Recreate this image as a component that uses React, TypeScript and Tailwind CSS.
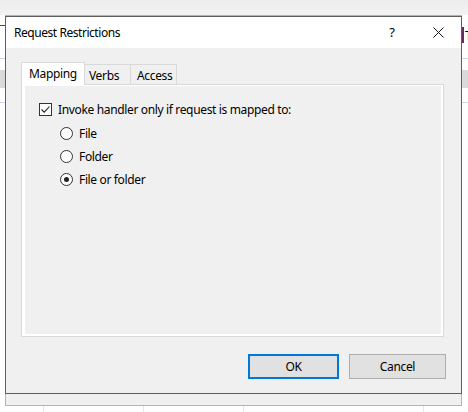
import React from "react";

const font = { fontFamily: '"Segoe UI", "Noto Sans", "Open Sans", sans-serif' };

function Radio({ checked, label }: { checked?: boolean; label: string }) {
  return (
    <div className="flex items-center h-[23px]">
      <div className="w-[13px] h-[13px] rounded-full border border-[#333333] bg-white flex items-center justify-center">
        {checked && <div className="w-[5px] h-[5px] rounded-full bg-[#222222]" />}
      </div>
      <span className="ml-[6px] text-[12px] leading-[16px] tracking-[-0.35px] text-black">{label}</span>
    </div>
  );
}

export default function App() {
  return (
    <div className="w-[468px] h-[412px] bg-white overflow-hidden flex flex-col" style={font}>
      {/* top background strip */}
      <div className="h-[15px] bg-gradient-to-b from-[#ececec] to-[#f3f3f3]" />
      <div className="flex h-[391px]">
        {/* left background strip */}
        <div className="w-[5px] flex flex-col bg-white">
          <div className="h-[10px]" />
          <div className="h-[1px] bg-[#4b4068]" />
          <div className="h-[32px]" />
          <div className="h-[1px] bg-[#c9d6e8]" />
          <div className="h-[11px]" />
          <div className="h-[18px] bg-[#dadada]" />
          <div className="h-[14px]" />
          <div className="h-[1px] bg-[#c9d6e8]" />
        </div>
        {/* main window column */}
        <div className="w-[457px] flex flex-col">
          <div className="h-[1px] bg-[#b4b4b4]" />
          {/* dialog */}
          <div className="h-[378px] border border-[#5e5e5e] flex flex-col">
            <div className="h-[31px] bg-white flex items-center">
              <span className="ml-[8px] text-[12px] tracking-[-0.45px] text-black leading-[16px] mt-[1px]">Request Restrictions</span>
              <div className="flex-1" />
              <div className="w-[46px] h-full flex items-center justify-center text-[13px] text-black">?</div>
              <div className="w-[46px] h-full flex items-center justify-center">
                <svg width="11" height="11" viewBox="0 0 11 11">
                  <path d="M0.5 0.5 L10.5 10.5 M10.5 0.5 L0.5 10.5" stroke="#111" strokeWidth="1" />
                </svg>
              </div>
            </div>
            <div className="flex-1 bg-[#f0f0f0] flex flex-col pl-[15px] pr-[17px] pt-[14px]">
              {/* tabs */}
              <div className="flex items-end h-[22px] relative z-10">
                <div className="w-[64px] h-[23px] bg-white border-l border-t border-r border-[#d9d9d9] flex justify-center -mb-[1px]">
                  <span className="text-[12px] leading-[16px] tracking-[-0.35px] text-black mt-[3px]">Mapping</span>
                </div>
                <div className="w-[46px] h-[20px] border-t border-r border-[#d9d9d9] bg-[#f0f0f0] pl-[4px]">
                  <span className="text-[12px] leading-[16px] tracking-[-0.35px] text-black block mt-[3px]">Verbs</span>
                </div>
                <div className="w-[46px] h-[20px] border-t border-r border-[#d9d9d9] bg-[#f0f0f0] pl-[6px]">
                  <span className="text-[12px] leading-[16px] tracking-[-0.35px] text-black block mt-[3px]">Access</span>
                </div>
              </div>
              {/* panel */}
              <div className="h-[253px] border border-[#d9d9d9] bg-white pl-[3px] pt-[1px] pr-[2px] pb-[2px]">
                <div className="w-full h-full bg-[#f0f0f0] pl-[14px] pt-[17px] flex flex-col">
                  <div className="flex items-center h-[13px]">
                    <div className="w-[13px] h-[13px] border border-[#333333] bg-white">
                      <svg width="11" height="11" viewBox="0 0 11 11">
                        <path d="M1.5 5.5 L4.2 8.2 L9.5 2.5" stroke="#222" strokeWidth="1.1" fill="none" />
                      </svg>
                    </div>
                    <span className="ml-[6px] text-[12px] leading-[16px] tracking-[-0.35px] text-black">Invoke handler only if request is mapped to:</span>
                  </div>
                  <div className="ml-[21px] mt-[6px] flex flex-col">
                    <Radio label="File" />
                    <Radio label="Folder" />
                    <Radio label="File or folder" checked />
                  </div>
                </div>
              </div>
              {/* buttons */}
              <div className="flex justify-end mt-[17px] -mr-[2px] gap-[10px]">
                <div className="w-[91px] h-[25px] border-2 border-[#0078d7] bg-[#e1e1e1] flex items-center justify-center">
                  <span className="text-[12px] leading-[16px] tracking-[-0.35px] text-black">OK</span>
                </div>
                <div className="w-[97px] h-[25px] border border-[#adadad] bg-[#e1e1e1] flex items-center justify-center">
                  <span className="text-[12px] leading-[16px] tracking-[-0.35px] text-black">Cancel</span>
                </div>
              </div>
            </div>
          </div>
          <div className="h-[12px] bg-[#f0f0f0] border-l border-r border-b border-[#b4b4b4]" />
        </div>
        {/* right background strip */}
        <div className="flex-1 flex flex-col bg-white overflow-hidden">
          <div className="h-[12px]" />
          <div className="h-[16px] text-[13px] leading-[16px] text-black whitespace-nowrap overflow-hidden border-l-2 border-[#6a2c5a] pl-[1px]">Ty</div>
          <div className="h-[15px]" />
          <div className="h-[1px] bg-[#c9d6e8]" />
          <div className="h-[11px]" />
          <div className="h-[18px] bg-[#dadada]" />
          <div className="h-[14px]" />
          <div className="h-[1px] bg-[#c9d6e8]" />
        </div>
      </div>
      {/* bottom background strip with grid lines */}
      <div className="flex-1 flex bg-white">
        <div className="w-[43px]" />
        <div className="w-[1px] bg-[#dde8f5]" />
        <div className="w-[99px]" />
        <div className="w-[1px] bg-[#dde8f5]" />
        <div className="w-[99px]" />
        <div className="w-[1px] bg-[#dde8f5]" />
        <div className="w-[179px]" />
        <div className="w-[1px] bg-[#dde8f5]" />
      </div>
    </div>
  );
}
